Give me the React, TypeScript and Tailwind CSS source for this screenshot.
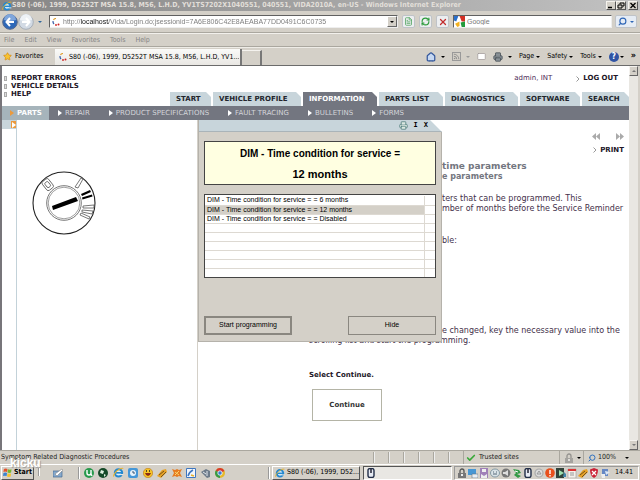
import type { ReactNode } from "react";
import { Search, Check, Star, House, Rss, Mail, Printer, RefreshCw, X, FileText } from "lucide-react";

const PAGE_TITLE = "S80 (-06), 1999, D5252T MSA 15.8, M56, L.H.D, YV1TS7202X1040551, 040551, VIDA2010A, en-US - Windows Internet Explorer";
const ADDRESS = "http://localhost/Vida/Login.do;jsessionid=7A6E806C42E8AEABA77DD0491C6C0735";

function IeLogo({ className }: { className: string }) {
  return (
    <svg viewBox="0 0 16 16" className={className} aria-hidden="true">
      <circle cx="8" cy="8.5" r="5.3" fill="#d9f0ff" stroke="#2588cf" strokeWidth="3" />
      <path d="M3 8.5h10" stroke="#2588cf" strokeWidth="2.4" />
      <path d="M10 11h5" stroke="#e8e8e4" strokeWidth="1.6" />
      <path d="M1 14C0 10 10 0 15 2" fill="none" stroke="#e8b32c" strokeWidth="1.5" />
    </svg>
  );
}

function VidaLogo() {
  return (
    <svg viewBox="0 0 16 16" className="size-2 shrink-0" aria-hidden="true">
      <path d="M8 1a6 6 0 0 0-5 3" fill="none" stroke="#e0a030" strokeWidth="2.4" />
      <path d="M2 6a7 7 0 0 0 2 6" fill="none" stroke="#3b5fa8" strokeWidth="2.4" />
      <circle cx="8" cy="14" r="1.8" fill="#c22" />
      <circle cx="13" cy="13" r="2" fill="#c22" />
    </svg>
  );
}

function Down({ className = "text-black" }: { className?: string }) {
  return (
    <svg viewBox="0 0 4 2" className={`h-[2px] w-1 shrink-0 ${className}`} aria-hidden="true">
      <path d="M0 0h4L2 2z" fill="currentColor" />
    </svg>
  );
}

function WinButton({ label, children }: { label: string; children: ReactNode }) {
  return (
    <button aria-label={label} className="flex h-[9px] w-[10px] items-center justify-center border border-[#f5f3ee] border-r-[#555] border-b-[#555] bg-[#d4d0c8]">
      <svg viewBox="0 0 8 7" className="h-[7px] w-2">{children}</svg>
    </button>
  );
}

function TitleBar() {
  return (
    <header className="flex h-[11px] items-center bg-gradient-to-r from-[#868686] to-[#c2c2c2] pr-[2px] pl-[2px]">
      <IeLogo className="size-[10px] shrink-0" />
      <h1 className="min-w-0 flex-1 truncate text-[7px] leading-[11px] font-bold text-[#e2dfd9] [font-family:'DejaVu_Sans_Condensed',sans-serif]">{PAGE_TITLE}</h1>
      <WinButton label="Minimize"><path d="M1 5.500h4" stroke="#000" strokeWidth="1.500" /></WinButton>
      <WinButton label="Restore"><path d="M3 2.500V1h4v3H5.500M1 3h4v3H1z" fill="none" stroke="#000" /></WinButton>
      <span className="w-[2px]" />
      <WinButton label="Close"><path d="M1.500 1l5 5M6.500 1l-5 5" stroke="#000" strokeWidth="1.300" /></WinButton>
    </header>
  );
}

function Arrow({ back }: { back: boolean }) {
  return (
    <button aria-label={back ? "Back" : "Forward"}>
      <svg viewBox="0 0 16 16" className="size-4">
        <circle cx="8" cy="8" r="7.300" fill={back ? "#2e68b8" : "#d2dae4"} stroke={back ? "#56688c" : "#a6aeb8"} />
        <path d="M2 6a6 6 0 0 1 12 0Q8 8 2 6" fill={back ? "#7fa6dc" : "#eef2f6"} />
        <path d={back ? "M12 8H5M8 4L4.500 8 8 12" : "M4 8h7M8 4l3.500 4L8 12"} fill="none" stroke="#fff" strokeWidth="2" />
      </svg>
    </button>
  );
}

function ToolButton({ label, children }: { label: string; children: ReactNode }) {
  return (
    <button aria-label={label} className="flex size-[13px] items-center justify-center rounded-[2px] border border-[#bfc3c8] bg-[#eceef0]">{children}</button>
  );
}

function AddressRow() {
  return (
    <div className="flex h-[22px] items-center border-b border-[#aaa79f] pr-[3px] pl-[2px]">
      <Arrow back />
      <Arrow back={false} />
      <span className="ml-1 flex w-[11px]"><Down className="text-[#33689c]" /></span>
      <div className="flex h-[13px] min-w-0 flex-1 items-center border border-[#606060] border-r-[#eee] border-b-[#eee] bg-white pl-[2px]">
        <VidaLogo />
        <input
          aria-label="Address"
          defaultValue={ADDRESS}
          className="ml-[3px] min-w-0 flex-1 bg-linear-[90deg,#777_18px,#111_18px,#111_46px,#777_46px] bg-clip-text text-[7px] leading-[11px] text-transparent outline-none [font-family:'Liberation_Sans',sans-serif]"
        />
        <button aria-label="Show addresses" className="flex h-[11px] w-[10px] items-center justify-center border border-white border-r-[#666] border-b-[#666] bg-[#d4d0c8]"><Down /></button>
      </div>
      <div className="ml-1 flex gap-1">
        <ToolButton label="Compatibility view"><FileText className="size-[9px] text-[#48a058]" /></ToolButton>
        <ToolButton label="Refresh"><RefreshCw className="size-[9px] text-[#2a9a3a]" strokeWidth={3} /></ToolButton>
        <ToolButton label="Stop"><X className="size-[10px] text-[#c22d2d]" strokeWidth={3} /></ToolButton>
      </div>
      <div className="ml-1 flex h-[13px] w-[159px] items-center border border-[#606060] border-r-[#eee] border-b-[#eee] bg-white">
        <svg viewBox="0 0 10 10" className="size-[11px]" aria-hidden="true">
          <path d="M0 0h4l-2 5-2-1z" fill="#2a70cc" /><path d="M5 0h5v5H7z" fill="#d33024" />
          <path d="M10 5v5H7L6 6z" fill="#219a3c" /><path d="M1 7l4-2v4l-2 1z" fill="#f2b01e" />
        </svg>
        <input aria-label="Search Google" placeholder="Google" className="ml-[2px] min-w-0 flex-1 text-[7px] leading-[11px] outline-none [font-family:'Liberation_Sans',sans-serif] placeholder:text-[#777]" />
      </div>
      <button aria-label="Search" className="ml-[3px] flex h-[13px] w-[22px] items-center justify-between rounded-[2px] border border-[#bfc3c8] bg-[#e6ecf4] px-[2px]">
        <Search className="size-[9px] -scale-x-100 text-[#2f66b6]" strokeWidth={3} />
        <Down className="text-[#2f66b6]" />
      </button>
    </div>
  );
}

function MenuBar() {
  return (
    <nav className="flex h-[14px] items-center gap-[10px] border-t border-b border-t-[#f2f0ec] border-b-[#aaa79f] pl-1 text-[7px] text-[#858585] [font-family:'DejaVu_Sans_Condensed',sans-serif]">
      {["File", "Edit", "View", "Favorites", "Tools", "Help"].map((m) => <button key={m}>{m}</button>)}
    </nav>
  );
}

function Command({ name }: { name: string }) {
  return <button className="flex items-center gap-[2px]">{name}<Down /></button>;
}

function TabRow() {
  return (
    <div className="flex h-[19px] items-center border-t border-b border-t-[#eeece7] border-b-[#6b6b6b] text-[7px] text-black [font-family:'DejaVu_Sans_Condensed',sans-serif]">
      <button className="flex w-[55px] items-center gap-[3px] pl-[3px]">
        <Star className="size-[9px] fill-[#f7c331] text-[#d68d1a]" />Favorites
      </button>
      <button className="mt-px flex h-4 w-[187px] items-center gap-[2px] border-r-2 border-[#777] bg-gradient-to-b from-[#fafaf8] to-[#e9e7e3] pl-1">
        <VidaLogo /><span className="truncate whitespace-nowrap">S80 (-06), 1999, D5252T MSA 15.8, M56, L.H.D, YV1...</span>
      </button>
      <button aria-label="New tab" className="mt-px h-[15px] w-5 border-t border-r-2 border-t-[#f4f2ee] border-r-[#777]" />
      <div className="ml-auto flex items-center gap-[7px] pr-1">
        <button aria-label="Home" className="flex items-center gap-[5px]"><House className="size-[10px] fill-[#c6d8f2] text-[#35589c]" strokeWidth={3} /><Down /></button>
        <button aria-label="Feeds" className="flex items-center gap-[5px]"><Rss className="size-[9px] border border-[#999] text-[#888]" strokeWidth={3} /><Down className="text-[#999]" /></button>
        <button aria-label="Read mail"><Mail className="size-[9px] fill-white text-[#a09a9a]" /></button>
        <button aria-label="Print" className="flex items-center gap-[5px]"><Printer className="size-[10px] fill-[#8a9298] text-[#485058]" /><Down /></button>
        <Command name="Page" /><Command name="Safety" /><Command name="Tools" />
        <button aria-label="Help" className="flex items-center gap-px"><span className="flex size-[10px] items-center justify-center rounded-full bg-[#3054a4] text-[8px] font-bold text-white">?</span><Down /></button>
        <span className="self-start text-[9px] leading-[9px] font-bold">»</span>
      </div>
    </div>
  );
}

function Tri({ className }: { className: string }) {
  return <svg viewBox="0 0 4 6" className={`h-[6px] w-1 shrink-0 ${className}`} aria-hidden="true"><path d="M0 0l4 3-4 3z" fill="currentColor" /></svg>;
}

function Chevron() {
  return <svg viewBox="0 0 4 6" className="h-[6px] w-1 shrink-0" aria-hidden="true"><path d="M.5.500L3 3 .5 5.500" fill="none" stroke="#999" /></svg>;
}

const TABS = [
  { name: "START", size: "w-[41px]" },
  { name: "VEHICLE PROFILE", size: "w-[88px]" },
  { name: "INFORMATION", size: "w-[74px]" },
  { name: "PARTS LIST", size: "w-[64px]" },
  { name: "DIAGNOSTICS", size: "w-[73px]" },
  { name: "SOFTWARE", size: "w-[60px]" },
  { name: "SEARCH", size: "w-[47px]" },
];

function SiteHeader() {
  return (
    <div className="[font-family:'DejaVu_Sans',sans-serif]">
      <div className="flex h-[25px] items-start justify-between pt-[7px] pr-[11px] pl-[2px]">
        <ul className="text-[7px] leading-[8px] font-bold text-[#221626]">
          {["REPORT ERRORS", "VEHICLE DETAILS", "HELP"].map((t) => (
            <li key={t}><a href="#" className="flex items-center gap-1"><span className="h-[5px] w-[3px] border border-[#aaa] bg-[#ddd]" />{t}</a></li>
          ))}
        </ul>
        <div className="flex items-center text-[7px] leading-[9px] text-[#4d2a55]">
          <span>admin, INT</span>
          <a href="#" className="ml-6 flex items-center gap-[3px] font-bold text-[#221626]"><Chevron />LOG OUT</a>
        </div>
      </div>
      <nav className="flex h-[14px] justify-end gap-[2px] text-[7px] font-bold text-[#22252c]">
        {TABS.map((t) => (
          <a
            key={t.name}
            href="#"
            className={`flex items-center pl-[6px] whitespace-nowrap [clip-path:polygon(0_0,calc(100%-5px)_0,100%_5px,100%_100%,0_100%)] ${t.size} ${t.name === "INFORMATION" ? "bg-[#737680] text-white" : "bg-[#c8d5db]"}`}
          >{t.name}</a>
        ))}
      </nav>
      <nav className="flex h-[14px] items-center gap-[19px] bg-[#737680] text-[7px] text-[#d3d5da]">
        <a href="#" className="-mr-[10px] flex h-full w-[47px] items-center gap-[3px] bg-[#a6b4bb] pl-2 font-bold text-white"><Tri className="text-[#eb9a3d]" />PARTS</a>
        {["REPAIR", "PRODUCT SPECIFICATIONS", "FAULT TRACING", "BULLETINS", "FORMS"].map((t) => (
          <a key={t} href="#" className="flex items-center gap-[3px]"><Tri className="text-white" />{t}</a>
        ))}
      </nav>
    </div>
  );
}

function IgnitionSwitch() {
  return (
    <svg viewBox="0 0 64 64" className="size-16" role="img" aria-label="Ignition switch position II">
      <g fill="none" stroke="#222">
        <circle cx="32" cy="32" r="31" strokeWidth="1.100" />
        <circle cx="32" cy="32" r="17.300" stroke="#555" strokeWidth=".8" />
        <circle cx="32" cy="32" r="15.800" stroke="#888" strokeWidth=".8" />
        <g stroke="#555" strokeWidth=".8">
          <rect x="12" y="8" width="8" height="11" rx="2" transform="rotate(-38 16 14)" />
          <rect x="14" y="10.500" width="4" height="6" rx="1.500" transform="rotate(-38 16 14)" />
          <path d="M43 16l6-9 2 1-5 9zM51 35l11-1v3L51 37zM50 39l11 1-1 3-10-2zM49 42l9 4-1 2-9-4z" />
        </g>
      </g>
      <path d="M20 35l24-9 2 4-25 9zM49 23l9-4 1 2-9 4zM50 26.500l10-3 .5 2-10 3z" fill="#000" />
    </svg>
  );
}

const VALUES = ["DIM - Time condition for service = = 6 months", "DIM - Time condition for service = = 12 months", "DIM - Time condition for service = = Disabled", "", "", "", "", "", ""];

function ProgrammingDialog() {
  return (
    <section role="dialog" aria-label="Programming" className="absolute top-0 left-[196px] w-[244px] border-b border-l border-[#b5b2ab] [font-family:'Liberation_Sans',sans-serif] [clip-path:polygon(0_0,calc(100%-12px)_0,100%_12px,100%_100%,0_100%)]">
      <div className="flex h-3 items-center justify-end gap-[6px] border-b border-[#aab4b9] bg-[#c8d5db] pr-[14px] text-[7px] font-bold [font-family:'DejaVu_Sans_Mono',monospace]">
        <button aria-label="Print"><Printer className="size-[9px] fill-[#dce8e2] text-[#4a7a78]" /></button>
        <button>I</button><button>X</button>
      </div>
      <div className="border-r border-[#b5b2ab] bg-[#d4d0c8] px-[5px] pt-[9px] pb-[6px]">
        <div className="flex h-[44px] flex-col items-center justify-center border border-[#444] bg-[#ffffe1] text-black">
          <p className="pt-px text-[10px] leading-[20px] font-bold">DIM - Time condition for service =</p>
          <p className="text-[11px] leading-[20px] font-bold">12 months</p>
        </div>
        <div className="mt-[9px] h-[84px] overflow-hidden border border-[#444] bg-white pt-px">
          <table className="w-full table-fixed border-collapse text-[7px] leading-[8px] text-black">
            <tbody>
              {VALUES.map((v, i) => (
                <tr key={i} className={`h-[9px] border-b border-[#ddd9d2] ${i === 1 ? "bg-[#d4d0c8]" : ""}`}>
                  <td className="border-r border-[#ddd9d2] p-0 pl-[2px] whitespace-nowrap">{v}</td>
                  <td className="w-[11px] bg-white p-0" />
                </tr>
              ))}
            </tbody>
          </table>
        </div>
        <div className="mt-[38px] flex justify-between text-[7px] text-black">
          <button className="h-[19px] w-[88px] border-2 border-[#8a8780]">Start programming</button>
          <button className="h-[19px] w-[88px] border border-[#8a8780]">Hide</button>
        </div>
      </div>
    </section>
  );
}

function Instructions() {
  return (
    <main className="min-w-0 flex-1 pt-[13px] pl-[111px] text-[8px] leading-[10px] text-[#43304a]">
      <div className="flex flex-col items-end pr-[5px] text-[7px] font-bold text-[#221626]">
        <div className="flex gap-4">
          {["Previous", "Next"].map((n) => (
            <button key={n} aria-label={n}>
              <svg viewBox="0 0 8 7" className={`h-[7px] w-2 ${n === "Next" ? "-scale-x-100" : ""}`}><path d="M4 0v7L0 3.500zM8 0v7L4 3.500z" fill="#aaa" /></svg>
            </button>
          ))}
        </div>
        <a href="#" className="mt-[5px] flex items-center gap-[3px]"><Chevron />PRINT</a>
      </div>
      <div className="pl-[133px] whitespace-nowrap">
        <h2 className="mt-[6px] text-[9px] leading-[11px] font-bold text-[#737680]">time parameters</h2>
        <h3 className="font-bold text-[#737680]">e parameters</h3>
        <p className="mt-3">ters that can be programmed. This</p>
        <p>mber of months before the Service Reminder</p>
        <p className="mt-[22px]">ble:</p>
        <p className="mt-20">e changed, key the necessary value into the</p>
      </div>
      <p>scrolling list and start the programming.</p>
      <p className="mt-6 text-[7px] font-bold text-[#221626]">Select Continue.</p>
      <button className="mt-[9px] ml-[3px] h-8 w-[70px] border border-[#b4b4a6] text-[7px] font-bold text-[#333]">Continue</button>
    </main>
  );
}

function ScrollBar() {
  const cap = "flex h-[10px] items-center justify-center border border-[#f4f2ee] border-r-[#666] border-b-[#666] bg-[#d4d0c8]";
  return (
    <div className="flex w-[9px] flex-col justify-between bg-[#e9e7e2]">
      <button aria-label="Scroll up" className={cap}><span className="rotate-180"><Down className="text-[#777]" /></span></button>
      <button aria-label="Scroll down" className={cap}><Down className="text-[#777]" /></button>
    </div>
  );
}

function StatusBar() {
  return (
    <footer className="flex h-[14px] items-stretch border-t border-[#aaa79f] text-[7px] leading-[13px] text-[#222] [font-family:'DejaVu_Sans_Condensed',sans-serif]">
      <span className="flex-1 pl-px">Symptom Related Diagnostic Procedures</span>
      {[0, 1, 2, 3, 4, 5].map((n) => <span key={n} className="my-px w-[15px] border-l border-[#aaa79f] shadow-[inset_1px_0_0_#eee]" />)}
      <span className="flex w-[96px] items-center gap-[3px] border-l border-[#aaa79f] pl-[2px]"><Check className="size-[10px] text-[#3aa83a]" strokeWidth={4} />Trusted sites</span>
      <span className="flex w-6 items-center gap-[3px] border-l border-[#aaa79f] pl-1"><span className="opacity-50"><TrayGlyph kind="lock" /></span><Down /></span>
      <button className="flex w-[57px] items-center border-l border-[#aaa79f] pl-1"><Search className="mr-[2px] size-2 -scale-x-100 text-[#3272c0]" strokeWidth={3} />100%<span className="ml-[9px]"><Down /></span></button>
    </footer>
  );
}

function TrayGlyph({ kind }: { kind: string }) {
  const art: Record<string, ReactNode> = {
    lock: <g><path d="M3 5V3a2 2 0 0 1 4 0v2" fill="none" stroke="#555" strokeWidth="1.300" /><path d="M1 5h8v5H1z" fill="#777" /><path d="M4 6h2v2H4z" fill="#eee" /></g>,
    screen: <g><path d="M0 1h8v6H0z" fill="#4897d4" /><path d="M4 6h6v4H4z" fill="#e8eef4" stroke="#678" strokeWidth=".6" /></g>,
    user: <g><path d="M1 0h8v10H1z" fill="#a080b8" /><path d="M3 1h4v3H3zM2 6l3 2 3-2v4H2z" fill="#eee" /></g>,
    face: <g><ellipse cx="5" cy="5" rx="4.500" ry="4" fill="#d9e3e8" stroke="#8499a4" /><path d="M3 4h1M6 4h1M3 6h4" stroke="#567" /></g>,
    speaker: <g><circle cx="5" cy="5" r="4.500" fill="#777" /><path d="M2 4h2l3-2v6L4 6H2z" fill="#ddd" /></g>,
    plug: <g><path d="M1 1l6 1 2 3-4 1 4 2-3 2-4-3 2-2z" fill="#349a46" /><path d="M3 3l3 1" stroke="#fff" /></g>,
    mouse: <g><rect x="2" y=".5" width="6" height="9" rx="2" fill="#e7ebf3" stroke="#222e48" strokeWidth="1.400" /><path d="M5 1v4" stroke="#223" strokeWidth="1.500" /></g>,
    gear: <g><circle cx="5" cy="5" r="4" fill="#ddd" stroke="#aaa" strokeWidth="1.200" /><path d="M3 6l2-3 2 3z" fill="none" stroke="#999" /></g>,
    alert: <g><circle cx="5" cy="5" r="4.800" fill="#e8501c" /><path d="M5 2v4M5 7v1.500" stroke="#fff" strokeWidth="1.400" /></g>,
    play: <g><path d="M0 0h8v10H0z" fill="#31433a" /><path d="M3 2l5 3-5 3z" fill="#9ce0b0" /><path d="M8 4l2 2v3H7z" fill="#48a" /></g>,
    note: <g><path d="M1 1h8v9H1z" fill="#f4f0ea" stroke="#999" strokeWidth=".6" /><path d="M1 1h8v2H1z" fill="#d33" /><path d="M3 5h4M3 7h4" stroke="#999" /></g>,
    pen: <g><path d="M0 8l5-6 4-1 1 3-6 6z" fill="#e7a226" /><path d="M2 7l5-4M4 9l5-5" stroke="#75531b" /></g>,
    shield: <g><path d="M5 0l4 1.500Q9 8 5 10 1 8 1 1.500z" fill="#cc2438" /><path d="M3 3l4 4M7 3L3 7" stroke="#fff" strokeWidth="1.300" /></g>,
    flag: <g><path d="M2 1h6v7H2z" fill="#6688c4" /><path d="M5 3l5 1-4 3z" fill="#dce8f6" /><path d="M1 6h4v4H2z" fill="#eee" /></g>,
    desk: <g><path d="M0 3h9v6H0z" fill="#86a9cc" stroke="#456a92" strokeWidth=".7" /><path d="M2 6l7-5 1 1-6 6z" fill="#fff" stroke="#777" strokeWidth=".5" /></g>,
    torrent: <g><circle cx="5" cy="5" r="5" fill="#279a4c" /><path d="M3 2v3q0 2 2 2t2-2V2M7 6l1 2" fill="none" stroke="#fff" strokeWidth="1.400" /></g>,
    globe: <g><circle cx="5" cy="5" r="5" fill="#154a28" /><path d="M3 2l3 1-1 3-3-1zM6 6l2 1-2 2z" fill="#dff0e0" /></g>,
    compass: <g><rect width="10" height="10" rx="2" fill="#4597d8" /><circle cx="5" cy="5" r="3" fill="#e8f2fa" /><path d="M5 3v2h2" fill="none" stroke="#357" /></g>,
    smile: <g><circle cx="5" cy="5" r="4.700" fill="#f6c326" stroke="#b87414" strokeWidth=".6" /><path d="M3 3h1M6 3h1" stroke="#222" strokeWidth="1.300" /><path d="M2 5h6q-1 3-3 3T2 5" fill="#8c2a13" /></g>,
    splat: <g><path d="M0 1l3 1 2-1 2 1 3-1-2 4 2 4-3-1-2 1-2-1-3 1 2-4z" fill="#e67b21" /><path d="M3 4l4 3M7 3L3 7" stroke="#fbd36a" /></g>,
    chart: <g><path d="M.5.500h9v9h-9z" fill="#f2f6fc" stroke="#3f77c0" /><path d="M2 8q1-4 5-6" fill="none" stroke="#3f77c0" strokeWidth="1.500" /><path d="M5 7l3 1" stroke="#e6b02c" strokeWidth="1.500" /></g>,
    shell: <g><path d="M0 4l5-3 4 2v6l-3 1z" fill="#6d7b8a" /><path d="M2 4l3 2M6 3v5" stroke="#e5eaef" /></g>,
    chrome: <g><circle cx="5" cy="5" r="5" fill="#e4b92c" /><path d="M5 5L.7 2.500A5 5 0 0 1 9.500 3z" fill="#d83a2c" /><path d="M5 5L.7 2.500A5 5 0 0 0 5 10z" fill="#379b48" /><circle cx="5" cy="5" r="2.200" fill="#3e7bd0" stroke="#fff" strokeWidth=".8" /></g>,
  };
  return <svg viewBox="0 0 10 10" className="size-[10px] shrink-0" aria-hidden="true">{art[kind]}</svg>;
}

const LAUNCH = ["torrent", "globe", "ie", "compass", "smile", "pen", "splat", "chart", "shell", "chrome"];
const TRAY = ["lock", "screen", "user", "face", "speaker", "plug", "mouse", "gear", "alert", "play", "note", "pen", "shield", "flag"];

function Divider() {
  return <span className="h-3 w-[2px] border-r border-l border-r-white border-l-[#999]" />;
}

function TaskBar() {
  return (
    <footer className="relative flex h-4 items-center border-t border-white pr-px pl-px text-[7px] [font-family:'DejaVu_Sans_Condensed',sans-serif]">
      <button className="flex h-[14px] w-[33px] items-center gap-[2px] border border-white border-r-[#555] border-b-[#555] pl-px font-bold">
        <svg viewBox="0 0 10 10" className="size-[9px]" aria-hidden="true">
          <path d="M1 1q2-1 4 0L4.500 4.500q-2-1-4 0z" fill="#e5532c" /><path d="M5.500 1.500q2 1 4 0L9 5q-2 1-4 0z" fill="#76b72e" />
          <path d="M.5 5.500q2-1 4 0L4 9Q2 8 0 9z" fill="#3b82d0" /><path d="M5 6q2 1 4 0l-.5 3.500q-2 1-4 0z" fill="#f5c22c" />
        </svg>
        Start
      </button>
      <span className="ml-1"><Divider /></span>
      <button aria-label="Show desktop" className="ml-[13px] w-[25px]"><TrayGlyph kind="desk" /></button>
      <Divider />
      <div className="mr-[43px] ml-1 flex w-[141px] justify-between">
        {LAUNCH.map((k) => <button key={k} aria-label={k}>{k === "ie" ? <IeLogo className="size-[11px]" /> : <TrayGlyph kind={k} />}</button>)}
      </div>
      <Divider />
      <button className="mr-[3px] ml-[2px] flex h-[14px] w-[88px] items-center gap-[2px] border border-white border-r-[#555] border-b-[#555] pl-[2px] whitespace-nowrap">
        <IeLogo className="size-[10px] shrink-0" />S80 (-06), 1999, D52...
      </button>
      <button aria-label="Programming" className="flex h-[14px] w-[89px] items-center border border-[#555] border-r-white border-b-white bg-[#e9e7e3] pl-[2px]"><TrayGlyph kind="mouse" /></button>
      <div className="ml-auto flex h-[14px] items-center gap-px border border-[#999] border-r-white border-b-white pr-[5px] pl-[2px]">
        {TRAY.map((k) => <TrayGlyph key={k} kind={k} />)}
        <time className="ml-1">14.41</time>
      </div>
      <span className="absolute -top-[7px] left-[10px] text-[12px] leading-[10px] font-bold text-white [font-family:'Liberation_Sans',sans-serif] [text-shadow:1px_1px_1px_#999]">kicku</span>
    </footer>
  );
}

export default function App() {
  return (
    <div className="flex min-h-screen flex-col overflow-hidden bg-[#d4d0c8]">
      <TitleBar />
      <AddressRow />
      <MenuBar />
      <TabRow />
      <div className="flex flex-1 border-x-2 border-r-[#d4d0c8] border-l-[#77757a]">
        <div className="flex min-w-0 flex-1 flex-col bg-white pt-px">
          <SiteHeader />
          <div className="relative flex flex-1 [font-family:'DejaVu_Sans',sans-serif]">
            <aside className="flex w-[15px] items-start border-r border-[#c3d2d9]">
              <button aria-label="Expand menu" className="flex h-[9px] w-full items-center justify-end bg-[#c8d5db]">
                <span className="flex h-[7px] w-[5px] items-center justify-center bg-[#eb9a3d]"><Tri className="text-white" /></span>
              </button>
            </aside>
            <div className="w-[181px] border-r border-[#d4d0c8] pt-[51px] pl-[15px]"><IgnitionSwitch /></div>
            <Instructions />
            <ProgrammingDialog />
          </div>
        </div>
        <ScrollBar />
      </div>
      <StatusBar />
      <TaskBar />
    </div>
  );
}
